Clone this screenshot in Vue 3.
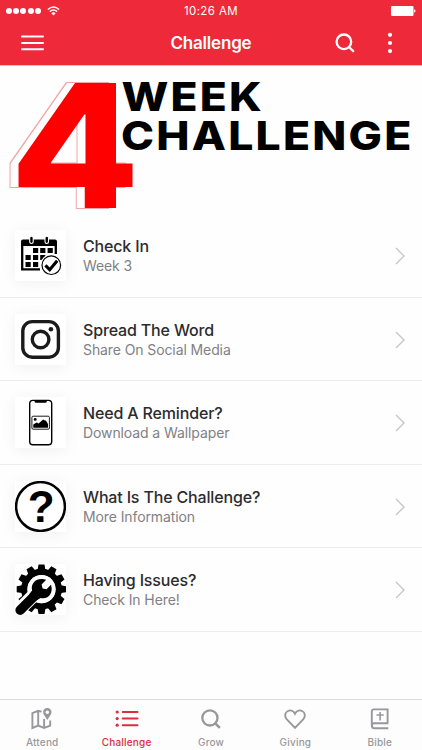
<template>
  <div class="screen">
    <header class="header">
      <div class="status">
        <div class="signal">
          <i v-for="n in 5" :key="n"></i>
          <svg width="13" height="10" viewBox="0 0 13 10" fill="none" stroke="#fff" stroke-width="1.6">
            <path d="M.9 3.5Q6.5-1.5 12.1 3.5M2.9 5.6Q6.5 2.4 10.1 5.6" />
            <path d="M4.4 7.2Q6.5 5.5 8.6 7.2L6.5 9.4Z" fill="#fff" stroke="none" />
          </svg>
        </div>
        <span class="time">10:26 AM</span>
        <svg class="battery" width="25" height="10" viewBox="0 0 25 10" fill="#fff">
          <rect width="22.5" height="10" rx="1" />
          <path d="M23.2 3.3q1.3.3 1.3 1.7t-1.3 1.7z" />
        </svg>
      </div>
      <div class="nav">
        <svg class="burger" width="23" height="16" viewBox="0 0 23 16" stroke="#fff" stroke-width="2" stroke-linecap="round">
          <path d="M1 1.6H22M1 8H22M1 14.2H22" />
        </svg>
        <h1>Challenge</h1>
        <svg class="search" width="20" height="20" viewBox="0 0 20 20" fill="none" stroke="#fff" stroke-width="2.3" stroke-linecap="round">
          <circle cx="8.9" cy="8.8" r="7.3" />
          <path d="M14.2 14.2L18.2 18.1" />
        </svg>
        <svg class="more" width="6" height="22" viewBox="0 0 6 22" fill="#fff">
          <circle cx="3" cy="2.8" r="2.1" />
          <circle cx="3" cy="11" r="2.1" />
          <circle cx="3" cy="19.1" r="2.1" />
        </svg>
      </div>
    </header>

    <svg class="banner" width="422" height="148" viewBox="0 66 422 148">
      <!-- hollow copy of the numeral, offset to the left -->
      <filter id="hollow" x="-20%" y="-10%" width="140%" height="120%" color-interpolation-filters="sRGB">
        <feOffset in="SourceAlpha" dx="-8" dy="0" result="copy" />
        <feMorphology in="copy" operator="dilate" radius="1" result="wide" />
        <feFlood flood-color="#f2a5a5" />
        <feComposite in2="wide" operator="in" result="line" />
        <feFlood flood-color="#fff" />
        <feComposite in2="copy" operator="in" result="fill" />
        <feMerge>
          <feMergeNode in="line" />
          <feMergeNode in="fill" />
          <feMergeNode in="SourceGraphic" />
        </feMerge>
      </filter>
      <text class="four" x="10" y="207.5" textLength="130" lengthAdjust="spacingAndGlyphs" filter="url(#hollow)">4</text>
      <text class="word" x="121.5" y="110.7" textLength="142.5" lengthAdjust="spacingAndGlyphs">WEEK</text>
      <text class="word" x="121" y="150" textLength="292.5" lengthAdjust="spacingAndGlyphs">CHALLENGE</text>
    </svg>

    <main class="list">
      <div v-for="item in items" :key="item.icon" class="row">
        <div class="tile">
          <svg v-if="item.icon === 'calendar'" width="51" height="51" viewBox="0 0 51 51">
            <path d="M6 11.5q0-2 2-2h32q2 0 2 2V16H6z" />
            <path d="M7.2 15V39.3H25M40.8 15V24" fill="none" stroke="#000" stroke-width="2.3" />
            <g stroke="#fff" stroke-width="1.1">
              <rect x="14.7" y="6.2" width="3.5" height="7.3" rx="1.7" />
              <rect x="30" y="6.2" width="3.5" height="7.3" rx="1.7" />
            </g>
            <path d="M18 18h5.2v5H18zM25.2 18h5.2v5h-5.2zM32.6 18h5.2v5h-5.2zM10.5 25.1h5.2v5h-5.2zM18 25.1h5.2v5H18zM25.2 25.1h5.2v5h-5.2zM10.5 32h5.2v5h-5.2zM18 32h5.2v5H18z" />
            <circle cx="36.3" cy="35.2" r="11" fill="#fff" />
            <circle cx="36.3" cy="35.2" r="9.3" fill="#fff" stroke="#000" stroke-width="1.2" />
            <path d="M30.4 35.4l4.3 4.3 7.5-9" fill="none" stroke="#000" stroke-width="3.1" />
          </svg>
          <svg v-else-if="item.icon === 'instagram'" width="51" height="51" viewBox="0 0 51 51" fill="none" stroke="#1b1b1b" stroke-width="3.4">
            <rect x="7.8" y="7.6" width="35.6" height="35.6" rx="9.5" />
            <circle cx="25.6" cy="25.5" r="8.3" />
            <circle cx="35.9" cy="15.2" r="2.3" fill="#1b1b1b" stroke="none" />
          </svg>
          <svg v-else-if="item.icon === 'phone'" width="51" height="51" viewBox="0 0 51 51">
            <rect x="14.7" y="3.4" width="22" height="44.4" rx="3.2" fill="#fff" stroke="#000" stroke-width="1.4" />
            <path d="M19.6 3.2h12.2v1.2q0 1.4-1.4 1.4H21q-1.4 0-1.4-1.4z" />
            <rect x="16.9" y="19.2" width="17.5" height="13" rx="1.2" fill="#fff" stroke="#000" stroke-width=".9" />
            <circle cx="20.2" cy="22.4" r="1.4" />
            <path d="M18.3 30.8v-3.2l3.3-2 2 1 4.5-4.2 1.8 1 1 .2 2.1 3.4v3.8z" />
          </svg>
          <svg v-else-if="item.icon === 'help'" width="51" height="51" viewBox="0 0 51 51">
            <circle cx="25.5" cy="25.5" r="24.4" fill="#fff" stroke="#000" stroke-width="2.5" />
            <text class="mark" x="26.3" y="40.6" text-anchor="middle">?</text>
          </svg>
          <svg v-else width="51" height="51" viewBox="0 0 51 51">
            <g transform="translate(26.5 25.2)">
              <circle r="17.2" fill="none" stroke="#000" stroke-width="6.4" />
              <path v-for="n in 12" :key="n" d="M-3.9-19.5L-3-24.8H3L3.9-19.5z" :transform="`rotate(${n * 30})`" />
            </g>
            <path d="M4 46L22 28" stroke="#fff" stroke-width="13.5" />
            <circle cx="26.5" cy="25.2" r="14.1" fill="#fff" />
            <path d="M5.2 46.2L21 30.4" stroke="#000" stroke-width="9.6" stroke-linecap="round" />
            <path d="M17.1 26.5C15.4 18.2 22.4 13 31.2 15.7L26.6 20.5 27.6 24.4 31.5 25.2 36 20.7C38.6 29 33.6 35.5 25.8 34L21 36.6 14.2 30.2z" />
          </svg>
        </div>
        <div class="labels">
          <div class="title">{{ item.title }}</div>
          <div class="sub">{{ item.sub }}</div>
        </div>
        <svg class="chevron" width="10" height="18" viewBox="0 0 10 18" fill="none" stroke="#c7c7cb" stroke-width="1.4">
          <path d="M1 1L9 9 1 17" />
        </svg>
      </div>
    </main>

    <nav class="tabs">
      <div v-for="tab in tabs" :key="tab" :class="['tab', { active: tab === 'Challenge' }]">
        <svg width="24" height="24" viewBox="0 0 24 24" fill="none" stroke="currentColor" stroke-width="2">
          <template v-if="tab === 'Attend'">
            <path d="M11.6 4.7L8.2 3.8 2.4 6.2V21L8.2 18.6 14.1 21 20.2 18.6V13.5M8.2 4V18.6M14.1 12V21" stroke-width="1.9" />
            <path d="M17.3 1C14.7 1 13.1 2.8 13.1 5.1 13.1 7.7 15.5 10 17.3 12.9 19.1 10 21.5 7.7 21.5 5.1 21.5 2.8 19.9 1 17.3 1zM17.3 3.5a1.8 1.8 0 1 1 0 3.6 1.8 1.8 0 0 1 0-3.6z" fill="currentColor" stroke="none" fill-rule="evenodd" />
          </template>
          <template v-else-if="tab === 'Challenge'">
            <path d="M7.7 5H22.5M7.7 11.6H22.5M7.7 18.2H22.5" stroke-linecap="round" />
            <g fill="currentColor" stroke="none">
              <circle cx="2.2" cy="5" r="1.6" />
              <circle cx="2.2" cy="11.6" r="1.6" />
              <circle cx="2.2" cy="18.2" r="1.6" />
            </g>
          </template>
          <template v-else-if="tab === 'Grow'">
            <circle cx="10.9" cy="10.9" r="7.6" stroke-width="2.3" />
            <path d="M16.3 16.3L20.8 20.8" stroke-width="2.6" />
          </template>
          <path v-else-if="tab === 'Giving'" d="M12 20.9L3.6 12.1C1 9.1 2.1 5.3 4.9 4 7.6 2.7 10.6 3.8 12 6.7 13.4 3.8 16.4 2.7 19.1 4 21.9 5.3 23 9.1 20.4 12.1z" stroke-width="1.9" />
          <template v-else>
            <path d="M20.3 16.3H6Q3.8 16.3 3.8 19V4.4Q3.8 2.4 5.8 2.4H19.6V16.5M3.8 18.6Q3.8 21.3 6.2 21.3H20.3" stroke-width="1.9" />
            <path d="M12.1 5V13.5M8.5 8H15.7" stroke-width="1.6" />
          </template>
        </svg>
        <span>{{ tab }}</span>
      </div>
    </nav>
  </div>
</template>

<script setup>
const items = [
  { icon: 'calendar', title: 'Check In', sub: 'Week 3' },
  { icon: 'instagram', title: 'Spread The Word', sub: 'Share On Social Media' },
  { icon: 'phone', title: 'Need A Reminder?', sub: 'Download a Wallpaper' },
  { icon: 'help', title: 'What Is The Challenge?', sub: 'More Information' },
  { icon: 'wrench', title: 'Having Issues?', sub: 'Check In Here!' }
]

const tabs = ['Attend', 'Challenge', 'Grow', 'Giving', 'Bible']
</script>

<style>
body {
  margin: 0;
}
</style>

<style scoped>
.screen {
  width: 422px;
  height: 750px;
  display: flex;
  flex-direction: column;
  overflow: hidden;
  background: #fefefe;
  font-family: Inter, "Liberation Sans", sans-serif;
}
svg {
  display: block;
  flex-shrink: 0;
}
.header {
  height: 66px;
  background: #ee2939;
  color: #fff;
  border-bottom: 1px solid #f6b9be;
  box-sizing: border-box;
}
.status {
  height: 22px;
  display: grid;
  grid-template-columns: 1fr auto 1fr;
  align-items: center;
  padding: 0 6px;
}
.signal {
  display: flex;
  align-items: center;
  gap: 1.2px;
}
.signal i {
  width: 6px;
  height: 6px;
  border-radius: 50%;
  background: #fff;
}
.signal svg {
  margin-left: 5px;
}
.time {
  font-size: 11.5px;
  letter-spacing: .4px;
}
.battery {
  justify-self: end;
}
.nav {
  height: 42px;
  display: grid;
  grid-template-columns: 127px 1fr 21px 33px 29px;
  align-items: center;
}
.burger {
  margin-left: 20.5px;
}
.nav h1 {
  margin: 0;
  padding-left: 43.5px;
  font-size: 17px;
  line-height: 22px;
  font-weight: 600;
  letter-spacing: -.2px;
}
.search {
  margin-left: -4px;
}
.more {
  justify-self: end;
}
.four {
  font-size: 172px;
  font-weight: 800;
  fill: #f00;
}
.word {
  font-size: 40px;
  font-weight: 800;
  letter-spacing: 2px;
  fill: #000;
}
.list {
  flex: 1;
}
.row {
  height: 83.5px;
  display: flex;
  align-items: center;
  box-sizing: border-box;
  padding: 0 17px 0 15px;
  border-bottom: 1px solid #ececee;
}
.tile {
  width: 51px;
  height: 51px;
  margin-top: 1px;
  background: #fff;
  box-shadow: 0 2px 14px rgba(0, 0, 0, .06);
}
.mark {
  font-family: "Liberation Sans", sans-serif;
  font-size: 44px;
  font-weight: 700;
}
.labels {
  flex: 1;
  margin: 1px 0 0 17px;
}
.title {
  font-size: 16px;
  line-height: 20px;
  font-weight: 500;
  letter-spacing: -.16px;
  color: #2c2c2e;
}
.sub {
  font-size: 14px;
  line-height: 19px;
  letter-spacing: -.1px;
  color: #818185;
}
.chevron {
  margin-top: 2px;
}
.tabs {
  height: 51px;
  display: flex;
  box-sizing: border-box;
  border-top: 1px solid #dcdcde;
  background: #fdfdfd;
}
.tab {
  flex: 1;
  display: flex;
  flex-direction: column;
  align-items: center;
  padding-top: 7px;
  color: #98989b;
  font-size: 10px;
  line-height: 12px;
  font-weight: 500;
  letter-spacing: .2px;
}
.tab span {
  margin-top: 5px;
}
.active {
  color: #dc2c42;
}
</style>
